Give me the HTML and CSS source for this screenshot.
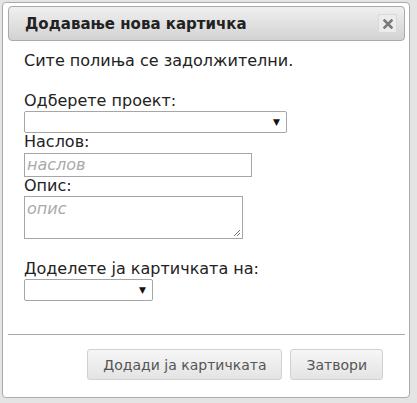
FILE: index.html
```html
<!DOCTYPE html>
<html lang="mk">
<head>
<meta charset="utf-8">
<link rel="stylesheet" href="styles.css">
</head>
<body>
<div class="dialog">
  <div class="titlebar">
    <span class="title">Додавање нова картичка</span>
    <button class="close" aria-label="close">
      <svg width="10" height="10" viewBox="0 0 10 10"><path d="M1.5 1.5 L8.5 8.5 M8.5 1.5 L1.5 8.5" stroke="#7a7a7a" stroke-width="2.6" stroke-linecap="square"/></svg>
    </button>
  </div>
  <div class="content">
    <p class="note">Сите полиња се задолжителни.</p>
    <label class="lbl lbl-first">Одберете проект:</label>
    <div class="select wide"><span class="arrow">▼</span></div>
    <label class="lbl">Наслов:</label>
    <div class="input">наслов</div>
    <label class="lbl">Опис:</label>
    <div class="textarea">опис
      <svg class="grip" width="9" height="9" viewBox="0 0 9 9"><path d="M8 2 L2 8 M8 5 L5 8" stroke="#777" stroke-width="1"/></svg>
    </div>
    <label class="lbl lbl-assign">Доделете ја картичката на:</label>
    <div class="select narrow"><span class="arrow">▼</span></div>
  </div>
  <div class="buttonpane">
    <button class="btn">Додади ја картичката</button>
    <button class="btn">Затвори</button>
  </div>
</div>
</body>
</html>
```
FILE: styles.css
```css
html, body {
  margin: 0;
  padding: 0;
}
body {
  background: #e4e4e4;
  width: 417px;
  height: 403px;
  overflow: hidden;
  font-family: "DejaVu Sans", Verdana, sans-serif;
  color: #222;
}
.dialog {
  margin: 2px 0 0 2px;
  width: 408px;
  height: 396px;
  box-sizing: border-box;
  background: #fff;
  border: 1px solid #aaa;
  border-radius: 4px;
  padding: 3px 4px 0 5px;
  display: flex;
  flex-direction: column;
}
.titlebar {
  height: 35px;
  box-sizing: border-box;
  border: 1px solid #aaa;
  border-radius: 4px;
  background: linear-gradient(#f0f0f0, #d2d2d2);
  display: flex;
  align-items: center;
  justify-content: space-between;
  padding: 0 7px 0 16px;
}
.title {
  font-weight: bold;
  font-size: 15px;
  color: #222;
}
.close {
  width: 19px;
  height: 19px;
  padding: 0;
  border: 1px solid #dadada;
  background: #ececec;
  display: flex;
  align-items: center;
  justify-content: center;
}
.content {
  padding: 0 0 0 16px;
  flex: 1;
  display: flex;
  flex-direction: column;
  align-items: flex-start;
  font-size: 16px;
}
.note {
  margin: 10px 0 0 0;
}
.lbl {
  display: block;
  line-height: 18px;
}
.lbl-first { margin-top: 22px; }
.lbl-assign { margin-top: 21px; }
.select {
  box-sizing: border-box;
  height: 22px;
  border: 1px solid #a6a6a6;
  border-radius: 2px;
  background: #fff;
  display: flex;
  align-items: center;
  justify-content: flex-end;
  padding-right: 6px;
  margin-top: 1px;
}
.arrow {
  font-size: 9px;
  color: #111;
}
.wide { width: 263px; }
.narrow { width: 129px; }
.input {
  box-sizing: border-box;
  width: 228px;
  height: 24px;
  border: 1px solid #a6a6a6;
  font-style: italic;
  color: #aaa;
  padding: 1px 0 0 2px;
  margin-top: 2px;
}
.textarea {
  position: relative;
  box-sizing: border-box;
  width: 219px;
  height: 43px;
  border: 1px solid #a6a6a6;
  font-style: italic;
  color: #aaa;
  padding: 2px 0 0 2px;
  margin-top: 1px;
}
.grip {
  position: absolute;
  right: 1px;
  bottom: 1px;
}
.buttonpane {
  box-sizing: border-box;
  border-top: 1px solid #aaa;
  height: 63px;
  display: flex;
  justify-content: flex-end;
  align-items: flex-start;
  gap: 8px;
  padding: 14px 22px 0 0;
}
.btn {
  height: 31px;
  box-sizing: border-box;
  border: 1px solid #d0d0d0;
  border-radius: 3px;
  background: linear-gradient(#f6f6f6, #e4e4e4);
  font-family: "DejaVu Sans", sans-serif;
  font-size: 14px;
  color: #555;
  padding: 0 15px;
}
```
